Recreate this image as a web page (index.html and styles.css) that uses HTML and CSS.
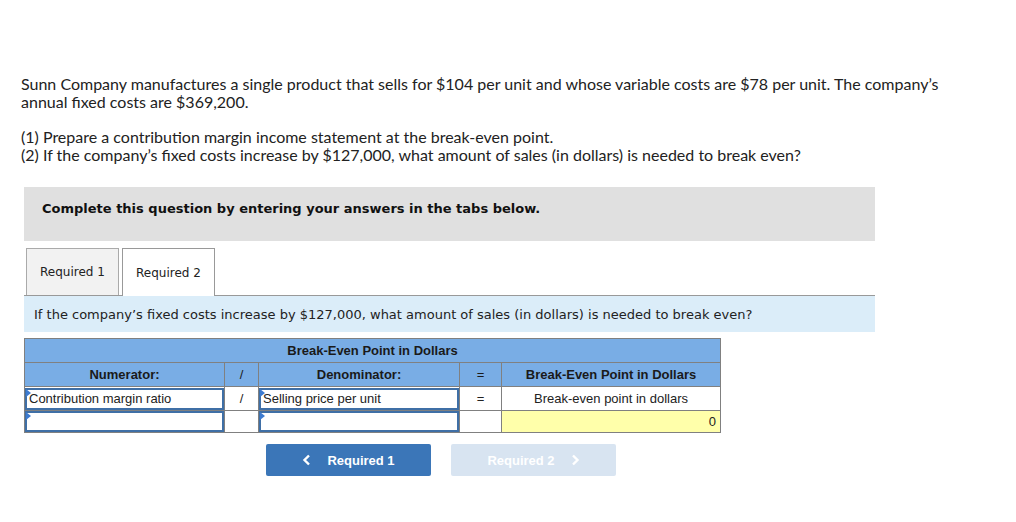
FILE: index.html
```html
<!DOCTYPE html>
<html>
<head>
<meta charset="utf-8">
<link rel="stylesheet" href="styles.css">
</head>
<body>
<div class="page">
  <div class="intro">
    <p>Sunn Company manufactures a single product that sells for $104 per unit and whose variable costs are $78 per unit. The company’s annual fixed costs are $369,200.</p>
    <p>(1) Prepare a contribution margin income statement at the break-even point.<br>(2) If the company’s fixed costs increase by $127,000, what amount of sales (in dollars) is needed to break even?</p>
  </div>
  <div class="work">
    <div class="notice">Complete this question by entering your answers in the tabs below.</div>
    <div class="tabs">
      <div class="tab">Required 1</div>
      <div class="tab active">Required 2</div>
    </div>
    <div class="prompt">If the company’s fixed costs increase by $127,000, what amount of sales (in dollars) is needed to break even?</div>
    <table class="grid">
      <colgroup>
        <col class="c1"><col class="c2"><col class="c3"><col class="c4"><col class="c5">
      </colgroup>
      <tr class="head">
        <th colspan="5">Break-Even Point in Dollars</th>
      </tr>
      <tr class="head">
        <th>Numerator:</th>
        <th class="op">/</th>
        <th>Denominator:</th>
        <th class="op">=</th>
        <th>Break-Even Point in Dollars</th>
      </tr>
      <tr>
        <td class="inp"><div class="field">Contribution margin ratio</div></td>
        <td class="op">/</td>
        <td class="inp"><div class="field">Selling price per unit</div></td>
        <td class="op">=</td>
        <td class="label">Break-even point in dollars</td>
      </tr>
      <tr class="last">
        <td class="inp"><div class="field"></div></td>
        <td class="op"></td>
        <td class="inp"><div class="field"></div></td>
        <td class="op"></td>
        <td class="result">0</td>
      </tr>
    </table>
    <div class="nav">
      <div class="btn prev"><svg width="10" height="12" viewBox="0 0 10 12"><polyline points="7,1.5 2.5,6 7,10.5" fill="none" stroke="#fff" stroke-width="2.4"/></svg><span>Required 1</span></div>
      <div class="btn next disabled"><span>Required 2</span><svg width="10" height="12" viewBox="0 0 10 12"><polyline points="3,1.5 7.5,6 3,10.5" fill="none" stroke="#fff" stroke-width="2.4"/></svg></div>
    </div>
  </div>
</div>
</body>
</html>
```
FILE: styles.css
```css
html, body {
  margin: 0;
  padding: 0;
  background: #fff;
}
.page {
  padding-top: 75px;
}
.intro {
  margin-left: 21px;
  width: 940px;
  font-family: Lato, "Open Sans", sans-serif;
  font-size: 16px;
  line-height: 17.5px;
  color: #222;
}
.intro p {
  margin: 0 0 18px 0;
}
.intro p:last-child {
  margin-bottom: 0;
}
.work {
  margin-left: 24px;
  width: 851px;
  margin-top: 24px;
}
.notice {
  background: #e0e0e0;
  height: 54px;
  box-sizing: border-box;
  padding: 14px 0 0 18px;
  line-height: 16px;
  font-family: "DejaVu Sans", Verdana, sans-serif;
  font-weight: bold;
  font-size: 13px;
  color: #111;
}
.tabs {
  display: flex;
  margin-top: 7px;
  padding-left: 2px;
  gap: 3px;
  height: 47px;
}
.tab {
  width: 93px;
  box-sizing: border-box;
  border: 1px solid #aaa;
  border-bottom: none;
  background: #f2f2f2;
  display: flex;
  align-items: center;
  justify-content: center;
  font-family: "DejaVu Sans", Verdana, sans-serif;
  font-size: 12px;
  color: #222;
}
.tab.active {
  background: #fff;
  border-color: #999;
  position: relative;
  z-index: 1;
  margin-bottom: -1px;
  height: 48px;
}
.prompt {
  border-top: 1px solid #999;
  background: #dbedf9;
  height: 37px;
  box-sizing: border-box;
  padding-left: 10px;
  display: flex;
  align-items: center;
  font-family: "DejaVu Sans", Verdana, sans-serif;
  font-size: 13px;
  color: #222;
}
.grid {
  margin-top: 6px;
  border-collapse: collapse;
  width: 696px;
  table-layout: fixed;
  font-family: "Liberation Sans", Arial, sans-serif;
  font-size: 13px;
  color: #222;
}
.c1 { width: 200px; }
.c2 { width: 34px; }
.c3 { width: 201px; }
.c4 { width: 42px; }
.c5 { width: 219px; }
.grid th, .grid td {
  border: 1px solid #808080;
  height: 23px;
  padding: 0;
  text-align: center;
}
.grid th {
  background: #79ade5;
  font-weight: bold;
  color: #1a1a1a;
}
.grid th.op, .grid td.op {
  font-weight: normal;
}
.grid td.inp {
  padding: 1px;
  height: 20px;
}
.grid tr.last td {
  height: 21px;
}
.grid tr.last td.inp {
  height: 19px;
}
.grid tr.last .field {
  height: 17px;
}
.field {
  position: relative;
  height: 18px;
  border: 2px solid #3f6fa6;
  box-sizing: content-box;
  text-align: left;
  line-height: 18px;
  padding-left: 2px;
  white-space: nowrap;
  margin: -1px -1px;
}
.field::before {
  content: "";
  position: absolute;
  left: -1px;
  top: -1px;
  width: 0;
  height: 0;
  border-top: 4px solid transparent;
  border-bottom: 4px solid transparent;
  border-left: 5px solid #3d7bd0;
}
.grid td.result {
  background: #ffffaa;
  text-align: right;
  padding-right: 4px;
}
.nav {
  display: flex;
  gap: 20px;
  margin-top: 11px;
  padding-left: 242px;
}
.btn {
  width: 165px;
  height: 32px;
  border-radius: 2px;
  background: #3b76b8;
  color: #fff;
  display: flex;
  align-items: center;
  justify-content: center;
  gap: 15px;
  font-family: "Liberation Sans", Arial, sans-serif;
  font-weight: bold;
  font-size: 13px;
}
.btn.disabled {
  background: #d8e4f1;
}
```
